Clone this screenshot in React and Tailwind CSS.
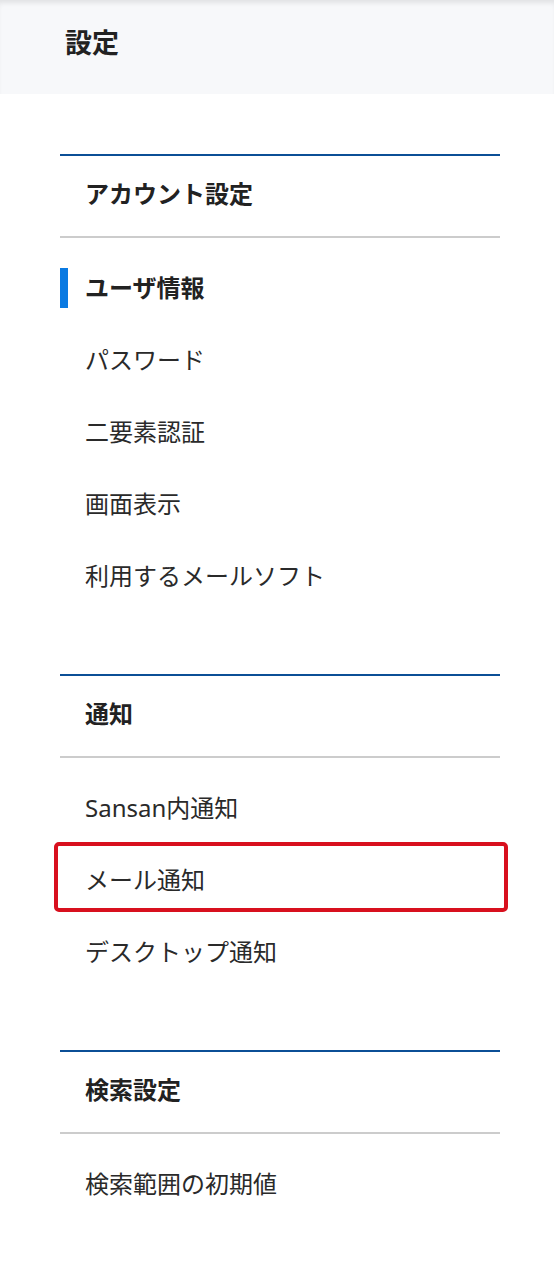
import React from "react";

const sections = [
  {
    title: "アカウント設定",
    items: ["ユーザ情報", "パスワード", "二要素認証", "画面表示", "利用するメールソフト"],
    active: 0,
  },
  {
    title: "通知",
    items: ["Sansan内通知", "メール通知", "デスクトップ通知"],
    highlight: 1,
  },
  {
    title: "検索設定",
    items: ["検索範囲の初期値"],
  },
];

export default function App() {
  return (
    <div
      className="min-h-[1262px] w-[554px] bg-white text-[#262626]"
      style={{ fontFamily: '"Noto Sans", "Noto Sans CJK JP", sans-serif' }}
    >
      <header className="h-[94px] bg-[#f7f8fa] shadow-[inset_0_5px_5px_-2px_rgba(0,0,0,0.09)] flex items-center px-[65px] pb-[10px]">
        <h1 className="text-[27px] font-bold leading-none text-[#222]">設定</h1>
      </header>
      <main className="pl-[60px] pr-[54px] pt-[60px] flex flex-col gap-[62px]">
        {sections.map((s, si) => (
          <section key={si}>
            <div className="border-t-2 border-[#0b4f96] h-[84px] flex items-center px-[25px] pb-[4px] border-b-2 border-b-[#cccccc]">
              <h2 className="text-[24px] font-bold leading-none text-[#222]">{s.title}</h2>
            </div>
            <ul className="pt-[14px]">
              {s.items.map((it, i) => (
                <li key={i} className="relative h-[72px] flex items-center px-[25px]">
                  {s.active === i && (
                    <span className="absolute left-0 top-[16px] w-[8px] h-[40px] bg-[#0a7ae2]" />
                  )}
                  {s.highlight === i && (
                    <span className="absolute left-[-6px] right-[-8px] top-[-2px] h-[70px] border-[4px] border-[#d8101e] rounded-[5px]" />
                  )}
                  <span
                    className={
                      "text-[24px] leading-none " +
                      (s.active === i ? "font-bold text-[#222]" : "text-[#2a2a2a]")
                    }
                  >
                    {it}
                  </span>
                </li>
              ))}
            </ul>
          </section>
        ))}
      </main>
    </div>
  );
}
